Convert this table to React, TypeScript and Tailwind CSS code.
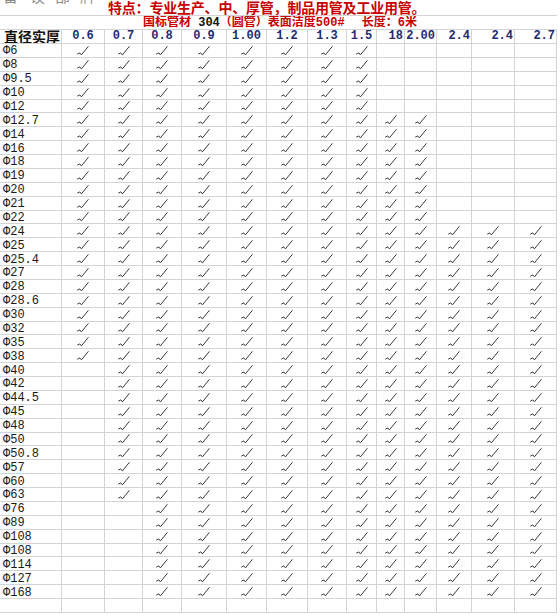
import React from 'react'

// column headers, wall thickness in mm
const headers = [
  { label: '0.6', align: 'center' },
  { label: '0.7', align: 'center' },
  { label: '0.8', align: 'center' },
  { label: '0.9', align: 'center' },
  { label: '1.00', align: 'center' },
  { label: '1.2', align: 'center' },
  { label: '1.3', align: 'center' },
  { label: '1.5', align: 'center' },
  { label: '18', align: 'right' },
  { label: '2.00', align: 'right' },
  { label: '2.4', align: 'right' },
  { label: '2.4', align: 'right' },
  { label: '2.7', align: 'right' },
]

// [label, first checked column, last checked column] (1-based)
const rows: [string, number, number][] = [
  ['Φ6', 1, 8],
  ['Φ8', 1, 8],
  ['Φ9.5', 1, 8],
  ['Φ10', 1, 8],
  ['Φ12', 1, 8],
  ['Φ12.7', 1, 10],
  ['Φ14', 1, 10],
  ['Φ16', 1, 10],
  ['Φ18', 1, 10],
  ['Φ19', 1, 10],
  ['Φ20', 1, 10],
  ['Φ21', 1, 10],
  ['Φ22', 1, 10],
  ['Φ24', 1, 13],
  ['Φ25', 1, 13],
  ['Φ25.4', 1, 13],
  ['Φ27', 1, 13],
  ['Φ28', 1, 13],
  ['Φ28.6', 1, 13],
  ['Φ30', 1, 13],
  ['Φ32', 1, 13],
  ['Φ35', 1, 13],
  ['Φ38', 1, 13],
  ['Φ40', 2, 13],
  ['Φ42', 2, 13],
  ['Φ44.5', 2, 13],
  ['Φ45', 2, 13],
  ['Φ48', 2, 13],
  ['Φ50', 2, 13],
  ['Φ50.8', 2, 13],
  ['Φ57', 2, 13],
  ['Φ60', 2, 13],
  ['Φ63', 2, 13],
  ['Φ76', 3, 13],
  ['Φ89', 3, 13],
  ['Φ108', 3, 13],
  ['Φ108', 3, 13],
  ['Φ114', 3, 13],
  ['Φ127', 3, 13],
  ['Φ168', 3, 13],
]

const grid =
  'grid grid-cols-[62px_43px_38px_39px_45px_40px_41px_39px_30px_28px_32px_35px_43px_42px]'
const cell = 'border-r border-b border-[#d4d4d4] flex items-center overflow-hidden'
const cjk = "font-['Noto_Sans_CJK_SC',sans-serif]"
const mono = "font-['Liberation_Mono',monospace]"

function Tick() {
  return (
    <svg width="12" height="10" viewBox="0 0 12 10" className="mt-[1px]">
      <path
        d="M0.6 8 L2.8 6.9 L4.4 8.9 L11.2 0.6"
        fill="none"
        stroke="#3c3c3c"
        strokeWidth="1"
        strokeLinejoin="round"
        strokeLinecap="round"
      />
    </svg>
  )
}

export default function App() {
  return (
    <div className={`w-[560px] h-[616px] bg-white overflow-hidden ${mono}`}>
      <div className={`${grid} w-[557px]`}>
        {/* cropped top row */}
        <div className="col-span-2 h-[15.5px] border-b border-[#d4d4d4] overflow-hidden">
          <div className={`flex pl-[3px] -mt-[12px] text-[15px] leading-[16px] text-[#8a8a8a] ${cjk}`}>
            <span className="w-[27px]">备</span>
            <span className="w-[25px]">误</span>
            <span className="w-[25px]">部</span>
            <span>牌</span>
          </div>
        </div>
        <div className="col-span-12 h-[15.5px] border-b border-[#d4d4d4] flex items-center pl-[3px] overflow-hidden">
          <span className={`text-[14px] leading-[15px] font-bold text-[#c80000] tracking-[-0.2px] whitespace-nowrap ${cjk}`}>
            特点：专业生产、中、厚管，制品用管及工业用管。
          </span>
        </div>

        {/* spec row */}
        <div className="col-span-3 h-[14px] border-b border-[#d4d4d4]" />
        <div className="col-span-11 h-[14px] border-b border-[#d4d4d4] flex items-center overflow-hidden">
          <span className={`text-[12px] leading-[13px] font-bold text-[#c80000] whitespace-pre ${cjk}`}>
            国标管材<span className={`text-[#111] ${mono}`}> 304</span>（圆管）表面洁度
            <span className={mono}>500#</span>
            <span className="inline-block w-[17px]" />
            长度：<span className={mono}>6</span>米
          </span>
        </div>

        {/* header */}
        <div className={`${cell} h-[14.5px] pl-[4px]`}>
          <span className={`text-[14px] leading-[14px] font-bold text-[#111] whitespace-nowrap ${cjk}`}>
            直径实厚
          </span>
        </div>
        {headers.map((h, i) => (
          <div
            key={i}
            className={`${cell} h-[14.5px] ${h.align === 'center' ? 'justify-center' : 'justify-end pr-[1px]'}`}
          >
            <span className="text-[12px] leading-[14px] font-bold text-[#1f2c6e] whitespace-nowrap">
              {h.label}
            </span>
          </div>
        ))}

        {/* data */}
        {rows.map(([label, from, to], r) => (
          <React.Fragment key={r}>
            <div className={`${cell} h-[13.875px] pl-[3px] pt-[2px]`}>
              <span className="text-[12px] leading-[12px] text-[#1a1a1a]">{label}</span>
            </div>
            {headers.map((_, c) => (
              <div key={c} className={`${cell} h-[13.875px] justify-center`}>
                {c + 1 >= from && c + 1 <= to && <Tick />}
              </div>
            ))}
          </React.Fragment>
        ))}

        {/* empty last row */}
        <div className={`${cell} h-[14px]`} />
        {headers.map((_, c) => (
          <div key={c} className={`${cell} h-[14px]`} />
        ))}
      </div>
    </div>
  )
}
